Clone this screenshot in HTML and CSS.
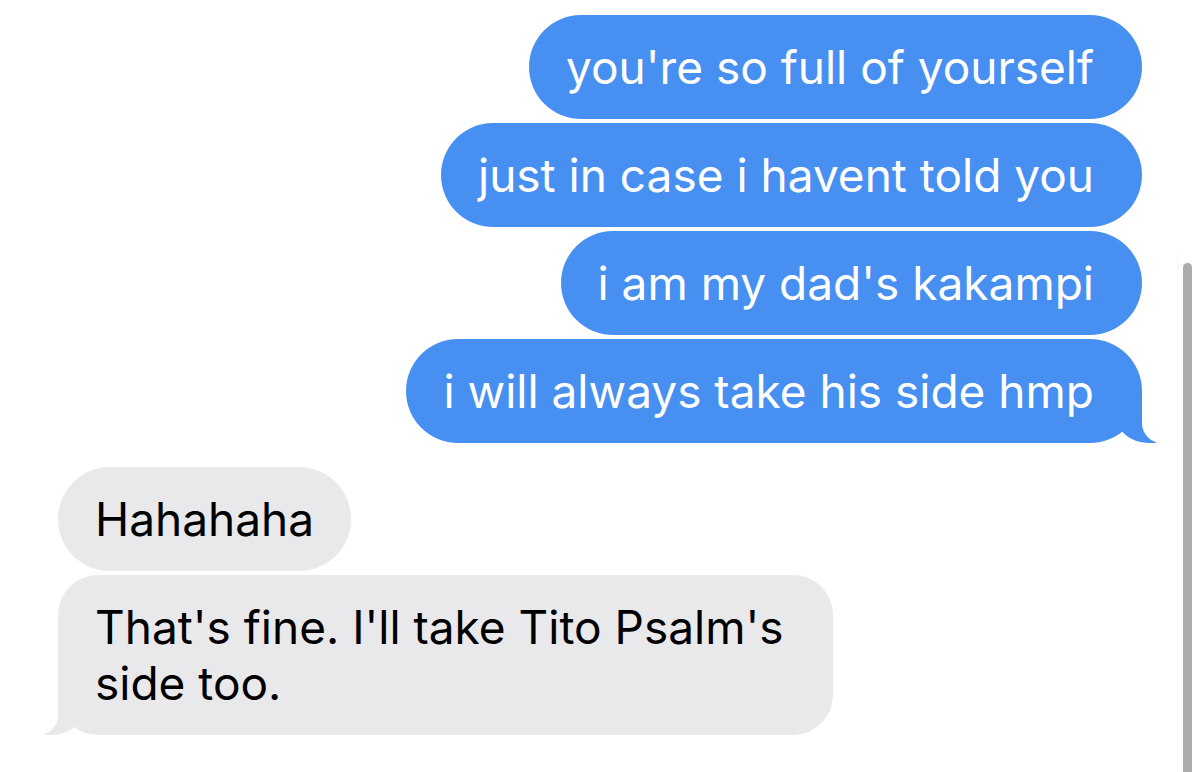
FILE: index.html
```html
<!DOCTYPE html>
<html lang="en">
<head>
    <meta charset="UTF-8">
    <meta name="viewport" content="width=device-width, initial-scale=1.0">
    <title>Messages</title>
    <link rel="stylesheet" href="styles.css">
</head>
<body>

<div class="thread">
    <!-- Messages I sent -->
    <div class="group sent">
        <div class="bubble">you're so full of yourself</div>
        <div class="bubble">just in case i havent told you</div>
        <div class="bubble">i am my dad's kakampi</div>
        <div class="bubble tail">i will always take his side hmp</div>
    </div>

    <!-- Messages I received -->
    <div class="group received">
        <div class="bubble">Hahahaha</div>
        <div class="bubble tail wrap">That's fine. I'll take Tito Psalm's side too.</div>
    </div>
</div>

<div class="scroll-track">
    <div class="scroll-thumb"></div>
</div>

</body>
</html>
```

FILE: styles.css
```css
/* Page */
body {
    margin: 0;
    background: #fff;
    font-family: Inter, "Noto Sans", sans-serif;
    height: 772px;
    overflow: hidden;
}

.thread {
    display: flex;
    flex-direction: column;
    gap: 24px;
    padding: 15px 58px 0;
}

/* Bubble groups */
.group {
    display: flex;
    flex-direction: column;
    gap: 4px;
}

.sent {
    align-items: flex-end;
}

.received {
    align-items: flex-start;
}

.bubble {
    position: relative;
    font-size: 46px;
    line-height: 56px;
    padding: 24px 37px;
    border-radius: 52px;
    box-sizing: border-box;
}

.sent .bubble {
    background: #4790f2;
    color: #fff;
    padding: 24px 48px 24px 37px;
}

.received .bubble {
    background: #e9e9eb;
    color: #000;
}

.received .wrap {
    max-width: 775px;
    border-radius: 40px;
}

/* Tails on the last bubble of a group */
.tail::before,
.tail::after {
    content: "";
    position: absolute;
    bottom: 0;
    height: 50px;
}

.sent .tail::before {
    right: -14px;
    width: 40px;
    background: #4790f2;
    border-bottom-left-radius: 32px 28px;
}

.sent .tail::after {
    right: -52px;
    width: 52px;
    background: #fff;
    border-bottom-left-radius: 20px;
}

.received .tail::before {
    left: -14px;
    width: 40px;
    background: #e9e9eb;
    border-bottom-right-radius: 32px 28px;
}

.received .tail::after {
    left: -52px;
    width: 52px;
    background: #fff;
    border-bottom-right-radius: 20px;
}

/* Scroll indicator on the right */
.scroll-track {
    position: absolute;
    top: 255px;
    right: 0;
    bottom: 0;
    width: 22px;
    border-left: 1px solid #f6f6f6;
}

.scroll-thumb {
    position: absolute;
    top: 8px;
    left: 5px;
    bottom: 0;
    width: 9px;
    background: #ababab;
    border-radius: 5px 5px 0 0;
}
```
